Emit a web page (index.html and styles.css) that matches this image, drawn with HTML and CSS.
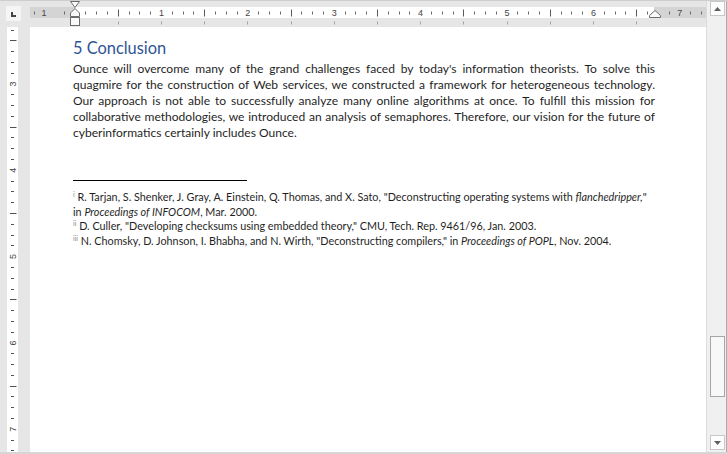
FILE: index.html
```html
<!DOCTYPE html>
<html>
<head>
<meta charset="utf-8">
<link rel="stylesheet" href="styles.css">
</head>
<body>
<div class="window">
  <div class="main">
    <div class="toprow">
      <div class="corner">
        <div class="corner-box">
          <svg width="15" height="15" viewBox="6 6 15 15"><path d="M11 12h2v3h3v2h-5z" fill="#444"/></svg>
        </div>
      </div>
      <svg class="hruler" width="676" height="26" viewBox="30 1 676 26">
        <rect x="30" y="7" width="45" height="11" fill="#d4d4d4"/>
        <rect x="75" y="7" width="579" height="11" fill="#fff"/>
        <rect x="654" y="7" width="52" height="11" fill="#d4d4d4"/>
        <path stroke="#6a6a6a" stroke-width="1" d="M34.5 11.5v3M64.5 11.5v3M85.5 11.5v3M96.5 11.5v3M107.5 11.5v3M129.5 11.5v3M139.5 11.5v3M150.5 11.5v3M172.5 11.5v3M183.5 11.5v3M193.5 11.5v3M215.5 11.5v3M226.5 11.5v3M237.5 11.5v3M258.5 11.5v3M269.5 11.5v3M280.5 11.5v3M301.5 11.5v3M312.5 11.5v3M323.5 11.5v3M345.5 11.5v3M355.5 11.5v3M366.5 11.5v3M388.5 11.5v3M399.5 11.5v3M409.5 11.5v3M431.5 11.5v3M442.5 11.5v3M453.5 11.5v3M474.5 11.5v3M485.5 11.5v3M496.5 11.5v3M517.5 11.5v3M528.5 11.5v3M539.5 11.5v3M561.5 11.5v3M571.5 11.5v3M582.5 11.5v3M604.5 11.5v3M615.5 11.5v3M625.5 11.5v3M647.5 11.5v3M669.5 11.5v3M690.5 11.5v3M701.5 11.5v3"/>
        <path stroke="#5a5a5a" stroke-width="1" d="M118.5 9.5v7M204.5 9.5v7M291.5 9.5v7M377.5 9.5v7M463.5 9.5v7M550.5 9.5v7M636.5 9.5v7"/>
        <path stroke="#a3a3a3" stroke-width="1" d="M118.5 21.5v3M161.5 21.5v3M204.5 21.5v3M247.5 21.5v3M291.5 21.5v3M334.5 21.5v3M377.5 21.5v3M420.5 21.5v3M463.5 21.5v3M507.5 21.5v3M550.5 21.5v3M593.5 21.5v3M636.5 21.5v3"/>
        <g class="rnum" text-anchor="middle">
          <text x="44" y="16">1</text>
          <text x="161.4" y="16">1</text>
          <text x="247.8" y="16">2</text>
          <text x="334.2" y="16">3</text>
          <text x="420.6" y="16">4</text>
          <text x="507" y="16">5</text>
          <text x="593.4" y="16">6</text>
          <text x="679.8" y="16">7</text>
        </g>
        <g fill="#fafafa" stroke="#6d6d6d" stroke-width="1">
          <polygon points="70.5,1.5 79.5,1.5 75,7.5"/>
          <polygon points="75,8.5 79.5,13 79.5,16.5 70.5,16.5 70.5,13"/>
          <rect x="70.5" y="17.5" width="9" height="8"/>
          <polygon points="655,10.5 660.5,15.5 660.5,17.5 649.5,17.5 649.5,15.5"/>
        </g>
      </svg>
    </div>
    <div class="bodyrow">
      <div class="vgutter">
        <svg class="vruler" width="11" height="425" viewBox="7 27 11 425">
          <rect x="7" y="27" width="11" height="425" fill="#fff"/>
          <path stroke="#505050" stroke-width="1" d="M11 30.5h3M11 51.5h3M11 62.5h3M11 73.5h3M11 94.5h3M11 105.5h3M11 116.5h3M11 137.5h3M11 148.5h3M11 159.5h3M11 181.5h3M11 191.5h3M11 202.5h3M11 224.5h3M11 235.5h3M11 245.5h3M11 267.5h3M11 278.5h3M11 289.5h3M11 310.5h3M11 321.5h3M11 332.5h3M11 353.5h3M11 364.5h3M11 375.5h3M11 396.5h3M11 407.5h3M11 418.5h3M11 440.5h3M11 450.5h3"/>
          <path stroke="#505050" stroke-width="1" d="M10 40.5h6.5M10 127.5h6.5M10 213.5h6.5M10 299.5h6.5M10 386.5h6.5"/>
          <g class="rnum" text-anchor="middle">
            <text transform="translate(15.5 84) rotate(-90)">3</text>
            <text transform="translate(15.5 170.3) rotate(-90)">4</text>
            <text transform="translate(15.5 256.6) rotate(-90)">5</text>
            <text transform="translate(15.5 343) rotate(-90)">6</text>
            <text transform="translate(15.5 429.3) rotate(-90)">7</text>
          </g>
        </svg>
      </div>
      <div class="page">
        <h2 class="heading">5 Conclusion</h2>
        <p class="body-text">Ounce will overcome many of the grand challenges faced by today's information theorists. To solve this quagmire for the construction of Web services, we constructed a framework for heterogeneous technology. Our approach is not able to successfully analyze many online algorithms at once. To fulfill this mission for collaborative methodologies, we introduced an analysis of semaphores. Therefore, our vision for the future of cyberinformatics certainly includes Ounce.</p>
        <div class="separator"></div>
        <div class="notes">
          <div class="note"><span class="nowrap"><span class="fn">i</span> R. Tarjan, S. Shenker, J. Gray, A. Einstein, Q. Thomas, and X. Sato, "Deconstructing operating systems with <em>flanchedripper,</em>"</span><br>in <em>Proceedings of INFOCOM</em>, Mar. 2000.</div>
          <div class="note"><span class="fn">ii</span> D. Culler, "Developing checksums using embedded theory," CMU, Tech. Rep. 9461/96, Jan. 2003.</div>
          <div class="note"><span class="fn">iii</span> N. Chomsky, D. Johnson, I. Bhabha, and N. Wirth, "Deconstructing compilers," in <em>Proceedings of POPL</em>, Nov. 2004.</div>
        </div>
      </div>
    </div>
  </div>
  <div class="scrollbar">
    <div class="sb-btn"><svg width="7" height="4" viewBox="0 0 7 4"><polygon points="0,4 7,4 3.5,0" fill="#606060"/></svg></div>
    <div class="sb-track"><div class="thumb"></div></div>
    <div class="sb-btn down"><svg width="7" height="4" viewBox="0 0 7 4"><polygon points="0,0 7,0 3.5,4" fill="#606060"/></svg></div>
  </div>
</div>
</body>
</html>
```

FILE: styles.css
```css
body {
  margin: 0;
  background: #ffffff;
}

.window {
  width: 727px;
  height: 454px;
  box-sizing: border-box;
  display: flex;
  background: #e6e6e6;
  border-top: 1px solid #cdcdcd;
  border-bottom: 2px solid #d6d6d6;
  overflow: hidden;
  font-family: "Lato", "Liberation Sans", sans-serif;
}

.main {
  width: 706px;
  display: flex;
  flex-direction: column;
}

.toprow {
  height: 26px;
  display: flex;
  flex-shrink: 0;
}

.corner {
  width: 30px;
}

.corner-box {
  margin: 5px 0 0 6px;
  width: 15px;
  height: 15px;
  background: #f5f5f5;
}

.corner-box svg,
.hruler,
.vruler {
  display: block;
}

.rnum {
  font-family: "Liberation Sans", sans-serif;
  font-size: 9px;
  fill: #444;
}

.bodyrow {
  flex: 1;
  min-height: 0;
  display: flex;
}

.vgutter {
  width: 30px;
  padding-left: 7px;
  box-sizing: border-box;
  flex-shrink: 0;
}

.page {
  flex: 1;
  background: #ffffff;
  padding: 11px 51px 0 43px;
  box-sizing: border-box;
  overflow: hidden;
  color: #1f1f1f;
}

.heading {
  margin: 0 0 3px;
  font-size: 16.4px;
  line-height: 20px;
  font-weight: 400;
  color: #2f5496;
}

.body-text {
  margin: 0;
  font-size: 12.05px;
  line-height: 16px;
  text-align: justify;
}

.separator {
  width: 174px;
  height: 1px;
  background: #000;
  margin-top: 39px;
}

.notes {
  margin-top: 9px;
  font-size: 10.8px;
  line-height: 14.7px;
}

.nowrap {
  white-space: nowrap;
}

.fn {
  font-size: 7px;
  color: #8a8a8a;
  vertical-align: 4px;
  line-height: 0;
}

.scrollbar {
  width: 21px;
  box-sizing: border-box;
  border-left: 1px solid #dcdcdc;
  border-right: 1px solid #ababab;
  background: #f0f0f0;
  padding: 0 1px 0 3px;
  display: flex;
  flex-direction: column;
}

.sb-btn {
  height: 15px;
  box-sizing: border-box;
  background: #fdfdfd;
  border: 1px solid #c8c8c8;
  display: flex;
  align-items: center;
  justify-content: center;
  flex-shrink: 0;
}

.sb-btn.down {
  margin-bottom: 2px;
}

.sb-track {
  flex: 1;
}

.thumb {
  margin-top: 320px;
  height: 61px;
  box-sizing: border-box;
  background: #f8f8f8;
  border: 1px solid #a6a6a6;
}
```
